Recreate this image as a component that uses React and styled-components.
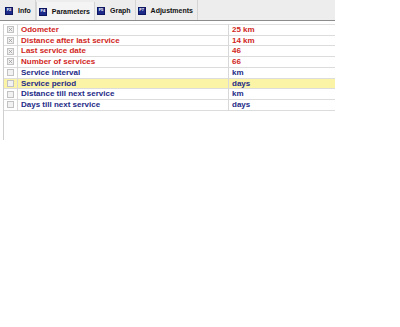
import React from "react";
import styled, { createGlobalStyle } from "styled-components";

const Global = createGlobalStyle`
  html, body { margin: 0; padding: 0; background: #fff; }
  body { font-family: "Liberation Sans", Arial, sans-serif; }
`;

const Wrapper = styled.div`
  width: 335px;
`;

const TabBar = styled.div`
  display: flex;
  height: 21px;
  padding-left: 3px;
  background: #ededed;
  border-bottom: 1px solid #8c8c8c;
  box-sizing: border-box;
`;

const Tab = styled.div`
  display: flex;
  align-items: center;
  gap: 5px;
  padding: 1px 4px 0 2px;
  font-size: 7px;
  font-weight: bold;
  color: #111;
  border-right: 1px solid #d4d4d4;
  border-left: ${(p) => (p.$active ? "1px solid #d4d4d4" : "none")};
  background: ${(p) => (p.$active ? "#f4f4f4" : "transparent")};
  margin-top: ${(p) => (p.$active ? "2px" : "0")};
`;

const Key = styled.span`
  display: inline-flex;
  align-items: center;
  justify-content: center;
  width: 8px;
  height: 8px;
  background: #1d2a8a;
  color: #fff;
  font-size: 4px;
  font-weight: bold;
  line-height: 1;
  padding-bottom: 2px;
  box-sizing: border-box;
  border: 1px solid #0d1660;
`;

const Panel = styled.div`
  margin-left: 3px;
  margin-top: 3px;
  border-left: 1px solid #cfcfcf;
  height: 116px;
`;

const Table = styled.table`
  width: 331px;
  border-collapse: collapse;
  border-top: 1px solid #e0e0e0;
`;

const Row = styled.tr`
  height: 10px;
  background: ${(p) => (p.$hl ? "#fbf3a6" : "transparent")};
  border-bottom: 1px solid #dcdcdc;
`;

const CheckCell = styled.td`
  width: 13px;
  padding: 0;
  text-align: center;
  border-right: 1px solid #d8d8d8;
  line-height: 0;
`;

const Cell = styled.td`
  padding: 0 0 0 3px;
  font-size: 8px;
  font-weight: bold;
  line-height: 9.7px;
  color: ${(p) => (p.$red ? "#d11f23" : "#1e2a86")};
  border-right: ${(p) => (p.$first ? "1px solid #d8d8d8" : "none")};
  width: ${(p) => (p.$first ? "207px" : "auto")};
  white-space: nowrap;
`;

const Box = styled.span`
  display: inline-block;
  width: 5px;
  height: 5px;
  border: 1px solid #c2c2c2;
  background: #f2f2f2;
  position: relative;
`;

const Check = () => (
  <svg width="5" height="5" viewBox="0 0 5 5" style={{ position: "absolute", left: 0, top: 0 }}>
    <path d="M0.8 0.8 L4.2 4.2 M4.2 0.8 L0.8 4.2" stroke="#9a9a9a" strokeWidth="0.8" />
  </svg>
);

const tabs = [
  { k: "F2", label: "Info" },
  { k: "F4", label: "Parameters", active: true },
  { k: "F5", label: "Graph" },
  { k: "F7", label: "Adjustments" },
];

const rows = [
  { name: "Odometer", value: "25 km", checked: true, red: true },
  { name: "Distance after last service", value: "14 km", checked: true, red: true },
  { name: "Last service date", value: "46", checked: true, red: true },
  { name: "Number of services", value: "66", checked: true, red: true },
  { name: "Service interval", value: "km" },
  { name: "Service period", value: "days", hl: true },
  { name: "Distance till next service", value: "km" },
  { name: "Days till next service", value: "days" },
];

export default function App() {
  return (
    <Wrapper>
      <Global />
      <TabBar>
        {tabs.map((t) => (
          <Tab key={t.k} $active={t.active}>
            <Key>{t.k}</Key>
            {t.label}
          </Tab>
        ))}
      </TabBar>
      <Panel>
        <Table>
          <tbody>
            {rows.map((r) => (
              <Row key={r.name} $hl={r.hl}>
                <CheckCell>
                  <Box>{r.checked && <Check />}</Box>
                </CheckCell>
                <Cell $first $red={r.red}>{r.name}</Cell>
                <Cell $red={r.red}>{r.value}</Cell>
              </Row>
            ))}
          </tbody>
        </Table>
      </Panel>
    </Wrapper>
  );
}
